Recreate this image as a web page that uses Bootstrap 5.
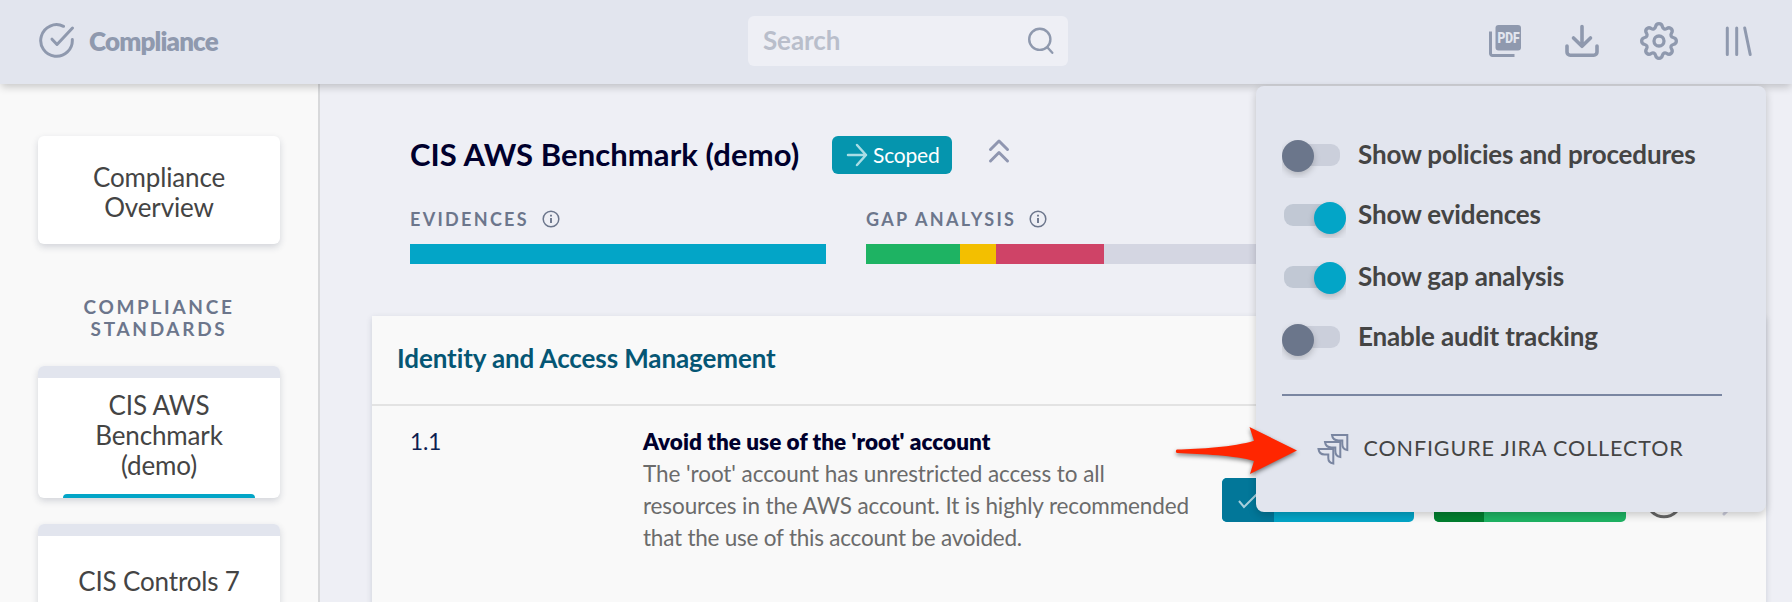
<!DOCTYPE html>
<html lang="en">
<head>
<meta charset="utf-8">
<title>Compliance</title>
<link href="https://cdn.jsdelivr.net/npm/bootstrap@5.3.0/dist/css/bootstrap.min.css" rel="stylesheet">
<style>
body{font-family:Lato,"Open Sans",sans-serif;background:#eeeff5;color:#444;width:1792px;height:602px;overflow:hidden}
svg{display:block;flex:none}
.topbar{height:84px;background:#e2e5ee;box-shadow:0 4px 8px -1px rgba(0,0,0,.2);z-index:5;color:#8f99ae;padding:0 37px 2px 38px}
.brand-name{font-size:26px;font-weight:800;line-height:30px;letter-spacing:-.85px;margin-left:13px;padding-bottom:1px}
.search-box{left:748px;top:16px;width:320px;height:50px;border-radius:6px;background:#eeeff5;padding:0 11px 2px 15px}
.search-hint{font-size:26px;font-weight:700;line-height:30px;color:#b9becb;letter-spacing:-.1px}
.shell{height:518px;overflow:hidden}
.side{width:320px;background:#f9f9f9;border-right:2px solid #d8d9db;padding:52px 38px 0}
.tile{width:242px;background:#fff;border-radius:6px;box-shadow:0 3px 7px rgba(40,50,80,.18);font-size:26px;line-height:30px;letter-spacing:-.15px;overflow:hidden;text-align:center}
.tile-cap{height:12px;background:#e2e5ee}
.side-title{font-size:19px;line-height:22px;letter-spacing:2.7px;font-weight:700;color:#6c768c;text-align:center;margin:52px 0 26px}
.tile-foot{height:4px;width:192px;background:#03a5c7;border-radius:5px 5px 0 0}
.content{padding:52px 26px 0 52px}
.page-title{font-size:31px;font-weight:700;line-height:36px;letter-spacing:.08px;color:#00002d;white-space:nowrap;width:422px}
.scoped{width:120px;height:38px;border-radius:6px;background:#0595ae;color:#fff;font-size:21px;letter-spacing:-.2px;line-height:36px;padding-left:14px;gap:5px}
.meter-label{font-size:18px;font-weight:700;letter-spacing:2.3px;line-height:22px;color:#6c768c}
.meter{height:20px;background:#d4d6e2}
.panel{margin-top:52px;height:400px;background:#f9f9f9;box-shadow:0 2px 6px rgba(40,50,80,.16)}
.panel-head{height:90px;border-bottom:2px solid #e3e3e3;padding:0 25px;font-size:26px;font-weight:700;letter-spacing:-.1px;color:#055674;line-height:85px}
.rule-row{padding:20px 0 0 38px;font-size:22.5px;line-height:32px;color:#6b6b6b}
.rule-id{width:233px;color:#0c2050}
.rule-text{width:579px;white-space:nowrap}
.rule-name{font-weight:800;color:#00002d;letter-spacing:.05px}
.rule-l1{letter-spacing:-.07px}
.rule-l2{letter-spacing:-.12px}
.rule-l3{letter-spacing:-.22px}
.state{width:192px;height:44px;border-radius:5px;overflow:hidden;margin-top:52px}
.settings{left:1256px;top:86px;width:510px;height:426px;border-radius:8px;background:#e2e5ee;box-shadow:0 3px 9px rgba(0,0,0,.2);z-index:6;padding:0 44px 0 26px}
.opt{font-size:26px;font-weight:700;line-height:28px;letter-spacing:-.15px;white-space:nowrap}
.opt-label{margin-left:16px}
.knob circle{filter:drop-shadow(0 3px 3px rgba(0,0,0,.2))}
.jira{font-size:21.5px;letter-spacing:.9px;line-height:34px;white-space:nowrap}
.pointer{left:1170px;top:420px;z-index:7;filter:drop-shadow(0 2px 2px rgba(0,0,0,.5))}
</style>
<script src="https://cdn.jsdelivr.net/npm/bootstrap@5.3.0/dist/js/bootstrap.bundle.min.js"></script>
</head>
<body class="position-relative">
<header class="topbar position-relative d-flex align-items-center justify-content-between">
  <div class="d-flex align-items-center">
    <svg width="38" height="38" viewBox="0 0 38 38" fill="none" stroke="currentColor" stroke-width="3" stroke-linecap="round" stroke-linejoin="round"><path d="M25.500 4.300A15.800 15.800 0 1 0 34.300 17.500"/><path d="M14 17.200l5 5.300L34.500 6"/></svg>
    <span class="brand-name">Compliance</span>
  </div>
  <div class="search-box position-absolute d-flex align-items-center justify-content-between">
    <span class="search-hint">Search</span>
    <svg width="30" height="30" viewBox="0 0 30 30" fill="none" stroke="currentColor" stroke-width="2.400" stroke-linecap="round"><circle cx="12.800" cy="14.300" r="10.600"/><path d="M20.300 22.300l5 5.500"/></svg>
  </div>
  <div class="d-flex align-items-center" style="gap:38px">
    <svg width="40" height="40" viewBox="0 0 40 40"><rect x="10.500" y="4" width="25.500" height="25.500" rx="3" fill="currentColor"/><path d="M5.500 10.500V32.500a1.900 1.900 0 0 0 1.900 1.900H29.500" fill="none" stroke="currentColor" stroke-width="3"/><text x="12.400" y="21.900" font-family="Roboto" font-weight="900" font-size="14.500" textLength="22.300" lengthAdjust="spacingAndGlyphs" fill="#e2e5ee">PDF</text></svg>
    <svg width="38" height="40" viewBox="0 0 38 40" fill="none" stroke="currentColor" stroke-width="3.600" stroke-linecap="round" stroke-linejoin="round"><path d="M19 5.500V25M10.500 17L19 25.300 27.500 17M4 25v6a3.200 3.200 0 0 0 3.200 3.200H30.800A3.200 3.200 0 0 0 34 31v-6"/></svg>
    <svg width="40" height="40" viewBox="-20 -20 40 40" fill="none" stroke="currentColor" stroke-width="3.300" stroke-linejoin="round"><circle r="5"/><path d="M-3.500-14.200C-2.600-18.400 2.600-18.400 3.500-14.200C4-12 6-11.400 7.600-12.400C11.200-14.800 14.800-11.200 12.400-7.600C11.400-6 12-4 14.200-3.500C18.400-2.600 18.400 2.600 14.200 3.500C12 4 11.400 6 12.400 7.600C14.800 11.200 11.200 14.800 7.600 12.400C6 11.400 4 12 3.500 14.200C2.600 18.400-2.600 18.400-3.500 14.200C-4 12-6 11.400-7.600 12.400C-11.200 14.800-14.800 11.200-12.400 7.600C-11.400 6-12 4-14.200 3.500C-18.400 2.600-18.400-2.600-14.200-3.500C-12-4-11.400-6-12.400-7.600C-14.800-11.200-11.200-14.800-7.600-12.400C-6-11.400-4-12-3.500-14.200Z"/></svg>
    <svg width="38" height="40" viewBox="0 0 38 40" fill="none" stroke="currentColor" stroke-width="3" stroke-linecap="round"><path d="M10.300 7v26.500M19.700 7v26.500M27.700 7l5.500 26.500"/></svg>
  </div>
</header>

<div class="shell d-flex">
  <aside class="side flex-shrink-0">
    <div class="tile" style="padding:26px 0 22px">Compliance<br>Overview</div>
    <div class="side-title">COMPLIANCE<br>STANDARDS</div>
    <div class="tile d-flex flex-column align-items-center" style="height:132px;margin-bottom:26px">
      <div class="tile-cap w-100"></div>
      <div style="padding-top:12px">CIS AWS<br>Benchmark<br>(demo)</div>
      <div class="tile-foot mt-auto"></div>
    </div>
    <div class="tile" style="height:132px">
      <div class="tile-cap"></div>
      <div style="padding-top:30px">CIS Controls 7</div>
    </div>
  </aside>

  <main class="content flex-grow-1">
    <div class="d-flex align-items-start" style="padding-left:38px;height:38px">
      <div class="page-title">CIS AWS Benchmark (demo)</div>
      <div class="scoped d-flex align-items-center">
        <svg width="22" height="24" viewBox="0 0 22 24" fill="none" stroke="#a9dde5" stroke-width="2.500" stroke-linecap="round" stroke-linejoin="round"><path d="M2 12h18M11 2l9 10-9 10"/></svg>
        <span style="padding-bottom:1px">Scoped</span>
      </div>
      <svg style="margin-left:36px" width="22" height="30" viewBox="0 0 22 30" fill="none" stroke="#8f96b0" stroke-width="3" stroke-linecap="round" stroke-linejoin="round"><path d="M2.500 13.500l8.500-8.500 8.500 8.500M2.500 25l8.500-8.500 8.500 8.500"/></svg>
    </div>
    <div class="d-flex" style="padding-left:38px;margin-top:34px;gap:40px">
      <div style="width:416px">
        <div class="meter-label d-flex align-items-center" style="height:22px">EVIDENCES
          <svg style="margin-left:13px" width="18" height="18" viewBox="0 0 18 18" fill="none" stroke="currentColor"><circle cx="9" cy="9" r="7.800" stroke-width="1.500"/><path d="M9 8v5M9 4.800v1.700" stroke-width="1.900"/></svg>
        </div>
        <div class="meter d-flex" style="margin-top:14px"><div style="width:100%;background:#03a5c7"></div></div>
      </div>
      <div style="width:600px">
        <div class="meter-label d-flex align-items-center" style="height:22px">GAP ANALYSIS
          <svg style="margin-left:13px" width="18" height="18" viewBox="0 0 18 18" fill="none" stroke="currentColor"><circle cx="9" cy="9" r="7.800" stroke-width="1.500"/><path d="M9 8v5M9 4.800v1.700" stroke-width="1.900"/></svg>
        </div>
        <div class="meter d-flex" style="margin-top:14px"><div style="width:94px;background:#1eb363"></div><div style="width:36px;background:#f3bf00"></div><div style="width:108px;background:#cf4367"></div></div>
      </div>
    </div>
    <section class="panel">
      <div class="panel-head">Identity and Access Management</div>
      <div class="rule-row d-flex">
        <div class="rule-id">1.1</div>
        <div class="rule-text"><span class="rule-name">Avoid the use of the 'root' account</span><br><span class="rule-l1">The 'root' account has unrestricted access to all</span><br><span class="rule-l2">resources in the AWS account. It is highly recommended</span><br><span class="rule-l3">that the use of this account be avoided.</span></div>
        <div class="state d-flex flex-shrink-0" style="background:#03a5c7">
          <div class="d-flex align-items-center" style="width:52px;background:#027799;padding-left:15px"><svg width="24" height="20" viewBox="0 0 24 20" fill="none" stroke="#a6cfdc" stroke-width="2"><path d="M2 11l5 6L21 3"/></svg></div>
        </div>
        <div class="state d-flex flex-shrink-0" style="background:#1eb363;margin-left:20px"><div style="width:50px;background:#027f2f"></div></div>
        <svg style="margin:44px 0 0 17px" width="100" height="60" viewBox="0 0 100 60" fill="none"><circle cx="21" cy="29.800" r="17" stroke="#666" stroke-width="3"/><path d="M80.500 23.500l10.500 10.500-10 10" stroke="#c9cad9" stroke-width="3" stroke-linecap="round"/></svg>
      </div>
    </section>
  </main>
</div>

<div class="settings position-absolute d-flex flex-column">
  <div class="opt d-flex" style="margin-top:54px;height:60px"><svg class="knob" width="60" height="38" viewBox="0 0 60 38"><rect x="2" y="4" width="56" height="22" rx="9" fill="#cbcfdb"/><circle cx="16" cy="16" r="16" fill="#6b768b"/></svg><span class="opt-label">Show policies and procedures</span></div>
  <div class="opt d-flex" style="height:62px"><svg class="knob" width="64" height="38" viewBox="0 0 64 38"><rect x="2" y="4" width="56" height="22" rx="9" fill="#c1c8d4"/><circle cx="48" cy="18" r="16" fill="#03a5c7"/></svg><span class="opt-label" style="margin-left:12px">Show evidences</span></div>
  <div class="opt d-flex" style="height:60px"><svg class="knob" width="64" height="38" viewBox="0 0 64 38"><rect x="2" y="4" width="56" height="22" rx="9" fill="#c1c8d4"/><circle cx="48" cy="16" r="16" fill="#03a5c7"/></svg><span class="opt-label" style="margin-left:12px">Show gap analysis</span></div>
  <div class="opt d-flex" style="height:72px"><svg class="knob" width="60" height="38" viewBox="0 0 60 38"><rect x="2" y="4" width="56" height="22" rx="9" fill="#cbcfdb"/><circle cx="16" cy="18" r="16" fill="#6b768b"/></svg><span class="opt-label">Enable audit tracking</span></div>
  <div style="height:2px;background:#7a86a1"></div>
  <div class="jira d-flex" style="margin:35px 0 0 35px">
    <svg width="34" height="36" viewBox="0 0 34 36" fill="#e2e5ee" stroke="#7a86a1" stroke-width="2">
      <path d="M15 4H30.300V19C27 18.500 25.300 16 25.300 13V9.500H21.500C18 9.500 15.500 7.500 15 4Z"/>
      <path d="M8 11H23.300V26C20 25.500 18.300 23 18.300 20V16.500H14.500C11 16.500 8.500 14.500 8 11Z"/>
      <path d="M1.500 18H16.300V32.500C13 32 11.300 29.500 11.300 27V23.500H7.500C4 23.500 2 21.500 1.500 18Z"/>
    </svg>
    <span style="margin-left:12.500px">CONFIGURE JIRA COLLECTOR</span>
  </div>
</div>

<svg class="pointer position-absolute" width="134" height="62" viewBox="0 0 134 62"><path d="M7 29.500C29 29 64 27 84 20.700L79.500 7 127 30.500 80 54 84 41C66 35.500 32 34 7 33C5.500 32.500 5.500 30 7 29.500Z" fill="#ff2600"/></svg>
</body>
</html>
